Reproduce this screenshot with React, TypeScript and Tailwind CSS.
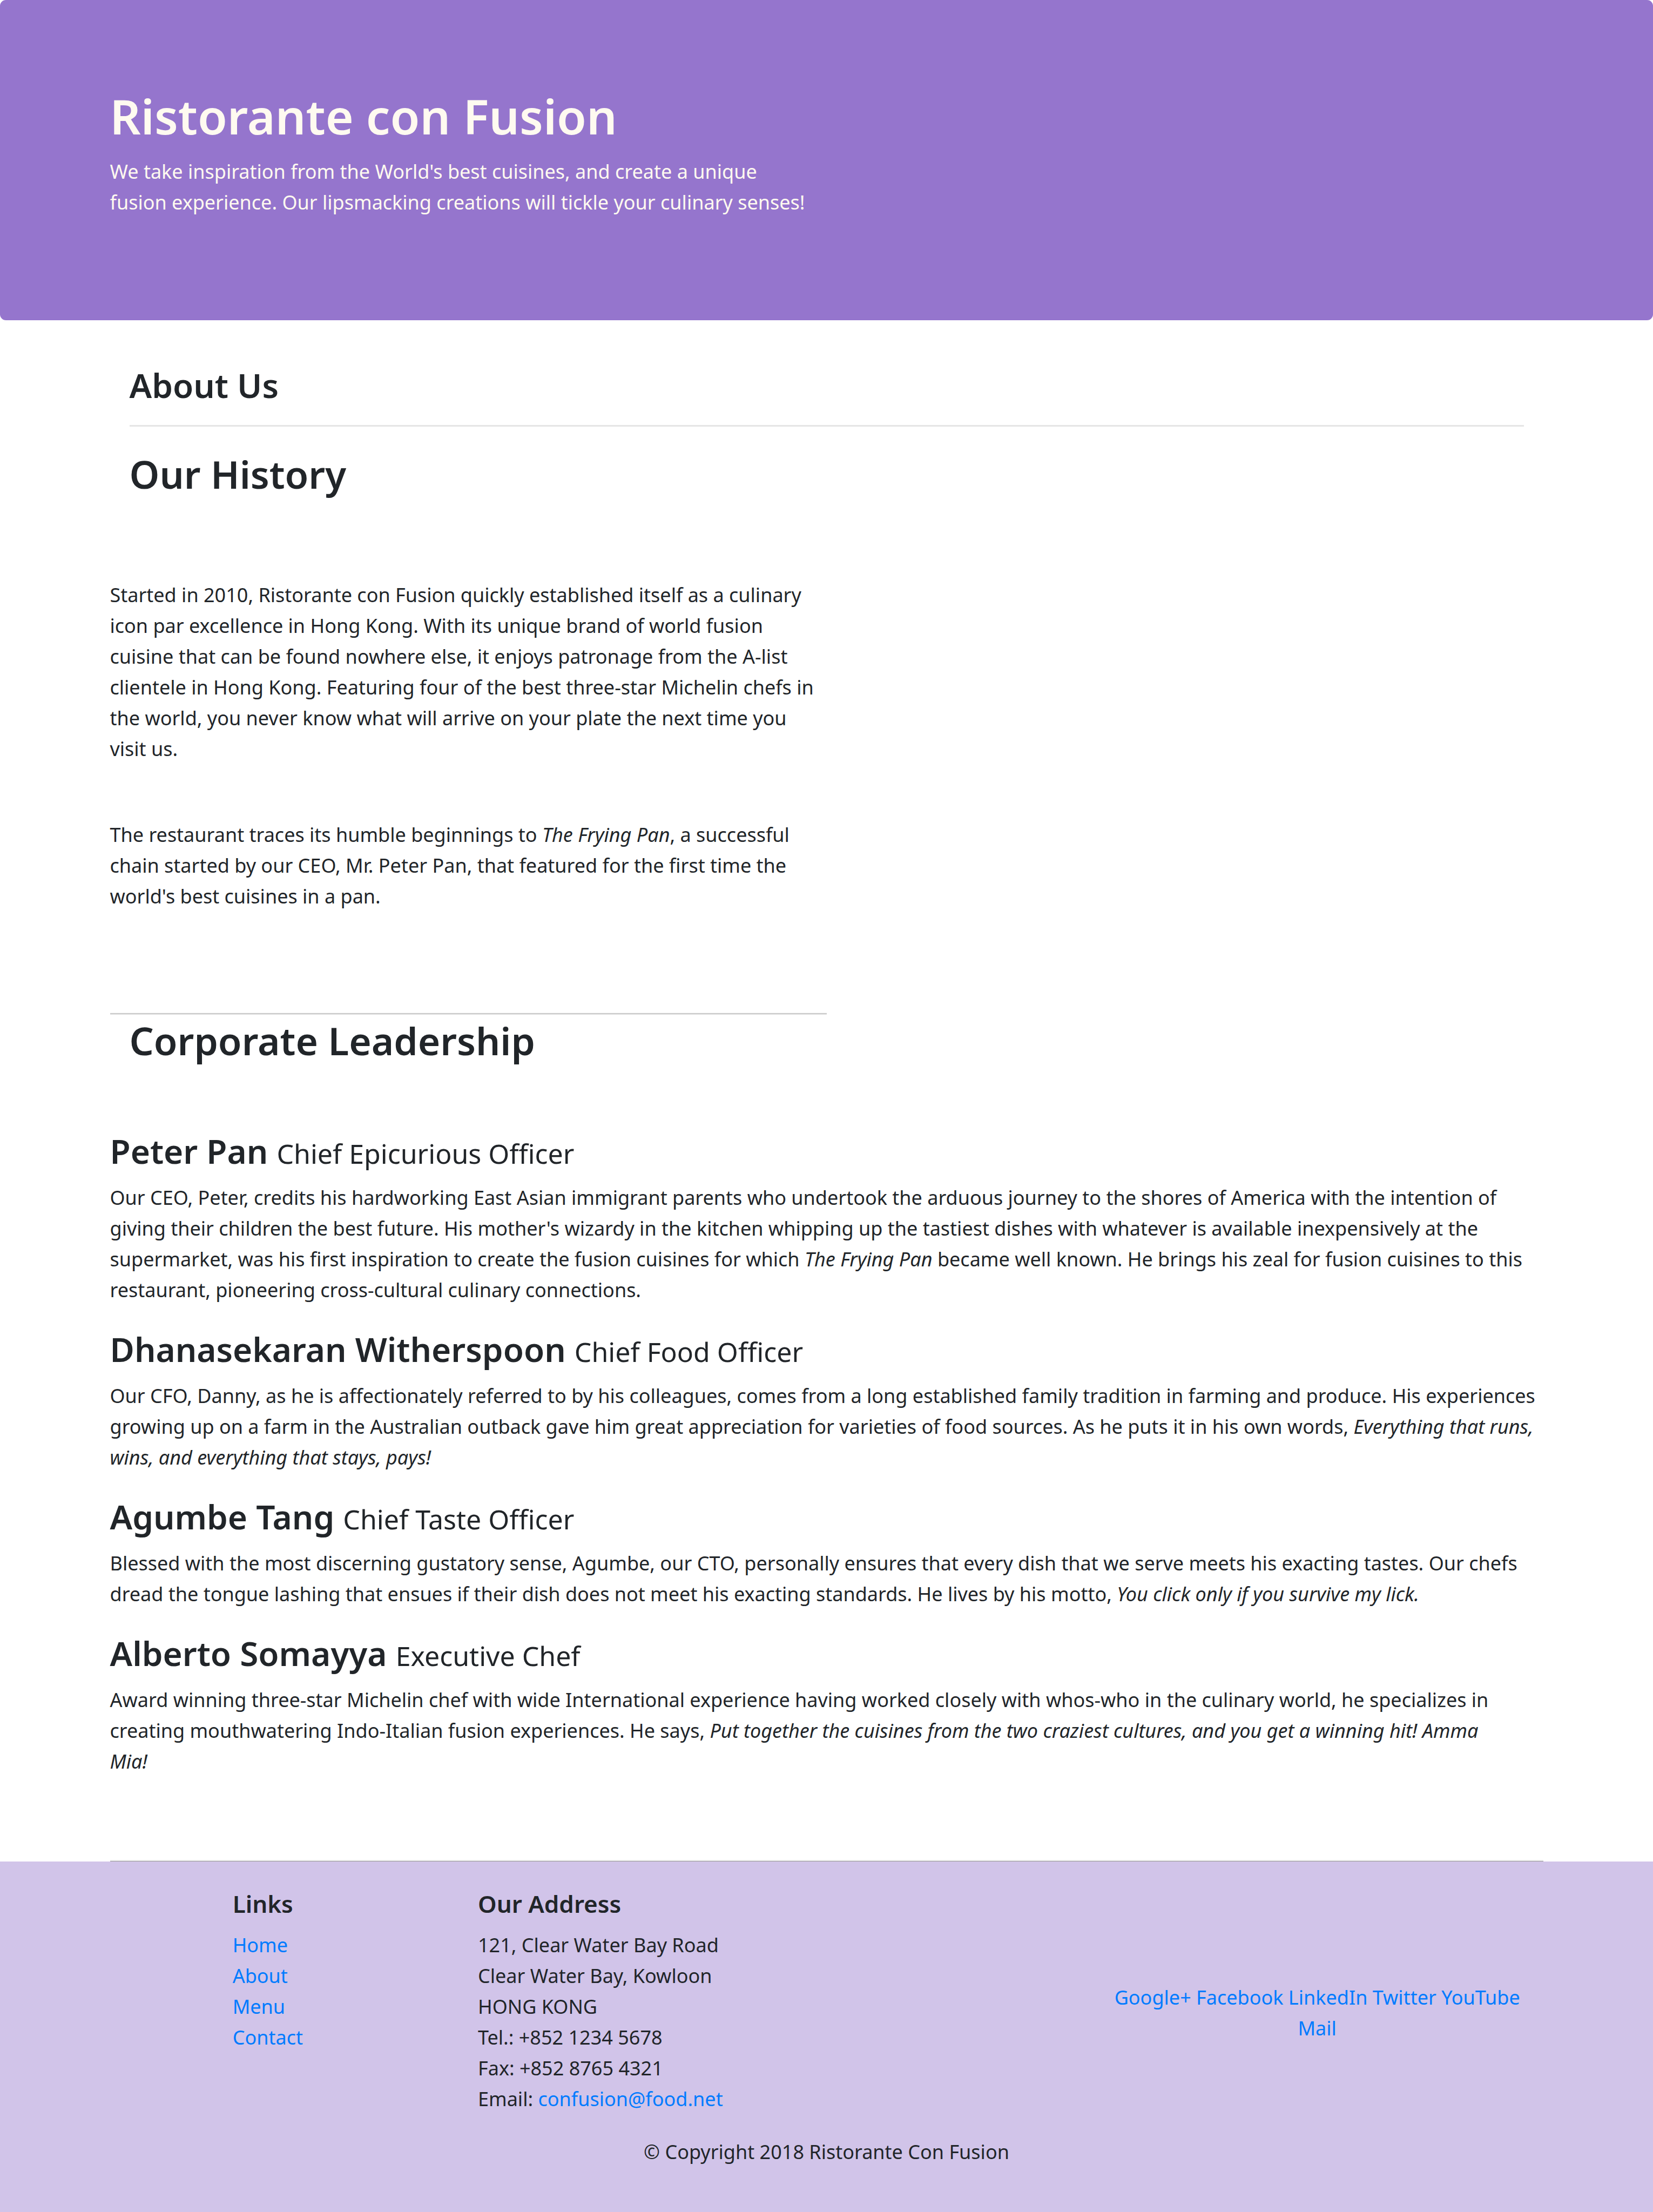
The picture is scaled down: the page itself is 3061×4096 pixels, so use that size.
import type { ReactNode } from "react";

const leaders: { name: string; role: string; bio: ReactNode }[] = [
  {
    name: "Peter Pan",
    role: "Chief Epicurious Officer",
    bio: (
      <>
        Our CEO, Peter, credits his hardworking East Asian immigrant parents who undertook the arduous journey to the
        shores of America with the intention of
        <br /> giving their children the best future. His mother's wizardy in the kitchen whipping up the tastiest
        dishes with whatever is available inexpensively at the
        <br /> supermarket, was his first inspiration to create the fusion cuisines for which <em>The Frying Pan</em>{" "}
        became well known. He brings his zeal for fusion cuisines to this
        <br /> restaurant, pioneering cross-cultural culinary connections.
      </>
    ),
  },
  {
    name: "Dhanasekaran Witherspoon",
    role: "Chief Food Officer",
    bio: (
      <>
        Our CFO, Danny, as he is affectionately referred to by his colleagues, comes from a long established family
        tradition in farming and produce. His experiences
        <br /> growing up on a farm in the Australian outback gave him great appreciation for varieties of food
        sources. As he puts it in his own words, <em>Everything that runs,</em>
        <br /> <em>wins, and everything that stays, pays!</em>
      </>
    ),
  },
  {
    name: "Agumbe Tang",
    role: "Chief Taste Officer",
    bio: (
      <>
        Blessed with the most discerning gustatory sense, Agumbe, our CTO, personally ensures that every dish that we
        serve meets his exacting tastes. Our chefs
        <br /> dread the tongue lashing that ensues if their dish does not meet his exacting standards. He lives by
        his motto, <em>You click only if you survive my lick.</em>
      </>
    ),
  },
  {
    name: "Alberto Somayya",
    role: "Executive Chef",
    bio: (
      <>
        Award winning three-star Michelin chef with wide International experience having worked closely with whos-who
        in the culinary world, he specializes in
        <br /> creating mouthwatering Indo-Italian fusion experiences. He says,{" "}
        <em>Put together the cuisines from the two craziest cultures, and you get a winning hit! Amma</em>
        <br /> <em>Mia!</em>
      </>
    ),
  },
];

const links = ["Home", "About", "Menu", "Contact"];
const social = ["Google+", "Facebook", "LinkedIn", "Twitter", "YouTube"];

function Container({ children }: { children: ReactNode }) {
  return <div className="mx-auto w-full max-w-[2726px] px-9">{children}</div>;
}

function RidgeRule() {
  return (
    <div aria-hidden="true">
      <div className="h-0.5 bg-[#eeeeee]" />
      <div className="h-px bg-[#9a9a9a]" />
    </div>
  );
}

export default function App() {
  return (
    <div className="bg-white font-['Noto_Sans',sans-serif] text-[36px] leading-[57px] text-[#212529]">
      <header className="rounded-[11px] bg-[#9575cd] pt-[157px] pb-[190px] text-[#fffaf0]">
        <Container>
          <h1 className="mb-[17px] text-[89px] leading-[115px] font-semibold">Ristorante con Fusion</h1>
          <p className="whitespace-nowrap">
            We take inspiration from the World's best cuisines, and create a unique
            <br /> fusion experience. Our lipsmacking creations will tickle your culinary senses!
          </p>
        </Container>
      </header>

      <main>
        <Container>
          <div className="px-9 pt-20">
            <h3 className="text-[62px] leading-[80px] font-semibold">About Us</h3>
            <hr className="mt-[34px] mb-[42px] h-[3px] border-0 bg-[#e5e5e5]" />
            <h2 className="text-[71px] leading-[92px] font-semibold">Our History</h2>
          </div>

          <section className="w-1/2">
            <div className="pt-[149px] pb-[187px] whitespace-nowrap">
              <p className="mb-[102px]">
                Started in 2010, Ristorante con Fusion quickly established itself as a culinary
                <br /> icon par excellence in Hong Kong. With its unique brand of world fusion
                <br /> cuisine that can be found nowhere else, it enjoys patronage from the A-list
                <br /> clientele in Hong Kong. Featuring four of the best three-star Michelin chefs in
                <br /> the world, you never know what will arrive on your plate the next time you
                <br /> visit us.
              </p>
              <p>
                The restaurant traces its humble beginnings to <em>The Frying Pan</em>, a successful
                <br /> chain started by our CEO, Mr. Peter Pan, that featured for the first time the
                <br /> world's best cuisines in a pan.
              </p>
            </div>
            <RidgeRule />
          </section>

          <h2 className="px-9 pt-[3px] text-[71px] leading-[92px] font-semibold">Corporate Leadership</h2>

          <section className="flex flex-col gap-[41px] pt-[118px] pb-[154px]">
            {leaders.map((leader) => (
              <article key={leader.name}>
                <h3 className="mb-[18px] text-[62px] leading-[80px] font-semibold">
                  {leader.name} <small className="text-[50px] leading-none font-normal">{leader.role}</small>
                </h3>
                <p className="whitespace-nowrap">{leader.bio}</p>
              </article>
            ))}
          </section>
          <RidgeRule />
        </Container>
      </main>

      <footer className="bg-[#d1c4e9] pt-[50px] pb-[83px]">
        <div className="mx-auto grid w-full max-w-[2726px] grid-cols-12 pb-[41px]">
          <nav className="col-span-2 col-start-2 px-9">
            <h5 className="mb-[19px] text-[44px] font-semibold">Links</h5>
            <ul>
              {links.map((label) => (
                <li key={label}>
                  <a href="#" className="text-[#007bff]">
                    {label}
                  </a>
                </li>
              ))}
            </ul>
          </nav>
          <div className="col-span-5 px-9">
            <h5 className="mb-[19px] text-[44px] font-semibold">Our Address</h5>
            <address className="not-italic">
              121, Clear Water Bay Road
              <br /> Clear Water Bay, Kowloon
              <br /> HONG KONG
              <br /> Tel.: +852 1234 5678
              <br /> Fax: +852 8765 4321
              <br /> Email:{" "}
              <a href="mailto:confusion@food.net" className="text-[#007bff]">
                confusion@food.net
              </a>
            </address>
          </div>
          <div className="col-span-4 -mb-[41px] self-center text-center whitespace-nowrap text-[#007bff]">
            <div>
              {social.map((label, i) => (
                <span key={label}>
                  {i > 0 && " "}
                  <a href="#">{label}</a>
                </span>
              ))}
            </div>
            <a href="mailto:">Mail</a>
          </div>
        </div>
        <p className="text-center">© Copyright 2018 Ristorante Con Fusion</p>
      </footer>
    </div>
  );
}
